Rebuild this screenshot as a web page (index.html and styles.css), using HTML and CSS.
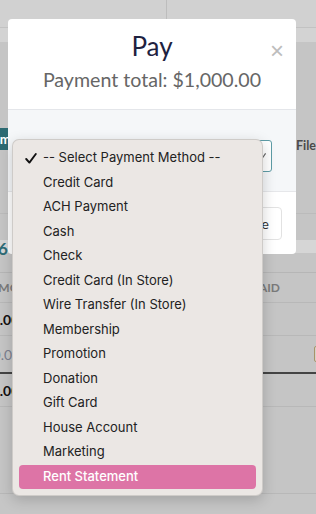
FILE: index.html
```html
<!DOCTYPE html>
<html lang="en">
<head>
  <meta charset="UTF-8">
  <title>Pay</title>
  <link rel="stylesheet" href="styles.css">
</head>
<body>
  <!-- page behind the modal (dimmed) -->
  <div class="page">
    <div class="topbar">
      <div class="tab"></div>
      <div class="tab"></div>
    </div>
    <div class="strip"></div>
    <div class="content">
      <div class="toolbar">
        <span class="btn-teal">Import</span>
        <span class="file-link">File</span>
      </div>
      <div class="divider"></div>
      <div class="count-row"><span class="count">6</span></div>
      <div class="table">
        <div class="row head"><span class="cell-left">AMOUNT</span><span class="cell-right">PAID</span></div>
        <div class="row"><span class="cell-left strong">1,000.00</span><span class="cell-right"></span></div>
        <div class="row total"><span class="cell-left muted">1,000.00</span><span class="check"></span></div>
        <div class="row"><span class="cell-left strong">1,000.00</span><span class="cell-right"></span></div>
        <div class="row last"></div>
      </div>
    </div>
  </div>

  <!-- modal -->
  <div class="modal">
    <div class="modal-head">
      <h2 class="modal-title">Pay</h2>
      <div class="modal-sub">Payment total: $1,000.00</div>
      <span class="modal-close">&times;</span>
    </div>
    <div class="modal-body">
      <div class="select-box">
        <svg class="chev" width="9" height="6" viewBox="0 0 9 6"><path d="M1 1l3.5 3.5L8 1" fill="none" stroke="#666" stroke-width="1.2"/></svg>
      </div>
    </div>
    <div class="modal-foot">
      <button class="btn-close">Close</button>
    </div>
  </div>

  <!-- native select popup -->
  <div class="dropdown">
    <div class="opt checked">
      <svg class="tick" width="12" height="11" viewBox="0 0 12 11"><path d="M1.2 6l3.2 3.6L10.8 1" fill="none" stroke="#111" stroke-width="1.9" stroke-linecap="round" stroke-linejoin="round"/></svg>
      -- Select Payment Method --
    </div>
    <div class="opt">Credit Card</div>
    <div class="opt">ACH Payment</div>
    <div class="opt">Cash</div>
    <div class="opt">Check</div>
    <div class="opt">Credit Card (In Store)</div>
    <div class="opt">Wire Transfer (In Store)</div>
    <div class="opt">Membership</div>
    <div class="opt">Promotion</div>
    <div class="opt">Donation</div>
    <div class="opt">Gift Card</div>
    <div class="opt">House Account</div>
    <div class="opt">Marketing</div>
    <div class="opt active">Rent Statement</div>
  </div>
</body>
</html>
```

FILE: styles.css
```css
body {
  margin: 0;
  width: 316px;
  height: 514px;
  overflow: hidden;
  background: #c6c6c6;
  font-family: 'Lato', 'Open Sans', sans-serif;
  position: relative;
}
.page {
  height: 514px;
  overflow: hidden;
}
.topbar {
  display: flex;
  height: 28px;
  background: #d1d1d1;
  border-bottom: 1px solid #c2c2c2;
  box-sizing: border-box;
}
.tab {
  width: 166px;
  border-right: 1px solid #bdbdbd;
}
.tab + .tab { flex: 1; border-right: none; }
.strip {
  height: 14px;
  background: #d3d3d3;
}
.content {
  background: #c5c5c5;
}
.toolbar {
  display: flex;
  justify-content: space-between;
  align-items: center;
  padding-top: 86px;
  height: 22px;
}
.btn-teal {
  background: #2c6a72;
  color: #fff;
  font-size: 13px;
  font-weight: 700;
  line-height: 22px;
  padding: 0 30px 0 0;
  margin-left: -4px;
  width: 80px;
}
.file-link {
  color: #4a4a4a;
  font-family: 'Lato', sans-serif;
  font-weight: 700;
  font-size: 12.5px;
  margin-right: 0;
  margin-top: 12px;
}
.divider {
  height: 63px;
  border-bottom: 1px solid #bbbbbb;
}
.count-row {
  margin-top: 26px;
  height: 13px;
  background: #d6d6d6;
  line-height: 17px;
}
.count {
  color: #2f6c77;
  font-size: 17px;
  font-weight: 700;
  margin-left: -2px;
}
.table {
  margin-top: 19px;
  border-top: 1px solid #b6b6b6;
}
.row {
  display: flex;
  justify-content: space-between;
  align-items: center;
  height: 30px;
  border-bottom: 1px solid #b8b8b8;
}
.row.head { height: 29px; }
.row + .row { height: 32px; }
.row.total { height: 36px; border-bottom: 2px solid #444; }
.row.last { height: 86px; }
.cell-left {
  margin-left: -9px;
  font-size: 14px;
  font-weight: 700;
  color: #111;
}
.head .cell-left, .head .cell-right {
  font-size: 12px;
  color: #7a7a7a;
}
.head .cell-left { margin-left: -10px; }
.cell-left.strong { margin-left: -36px; }
.cell-left.muted { margin-left: -35px; color: #7b7f8f; font-weight: 400; }
.cell-right { margin-right: 36px; font-weight: 700; }
.check {
  width: 14px;
  height: 14px;
  border: 1px solid #a8936a;
  border-radius: 2px;
  margin-right: -14px;
  background: #d6d3c9;
}

/* modal */
.modal {
  position: absolute;
  left: 8px;
  top: 19px;
  width: 288px;
  height: 235px;
  background: #fff;
  border-radius: 4px;
  overflow: hidden;
}
.modal-head {
  position: relative;
  height: 91px;
  box-sizing: border-box;
  border-bottom: 1px solid #e4e6ea;
  text-align: center;
  padding-top: 12px;
}
.modal-title {
  margin: 0;
  font-size: 26px;
  font-weight: 400;
  color: #1e2240;
  line-height: 30px;
}
.modal-sub {
  margin-top: 7px;
  font-size: 19.6px;
  color: #666;
  line-height: 24px;
}
.modal-close {
  position: absolute;
  right: 12px;
  top: 18px;
  font-size: 24px;
  color: #bdbdbd;
  font-family: 'Liberation Sans', sans-serif;
}
.modal-body {
  height: 82px;
  box-sizing: border-box;
  background: #f5f7f9;
  border-bottom: 1px solid #e6e7ea;
  padding: 30px 24px 0 24px;
}
.select-box {
  height: 32px;
  box-sizing: border-box;
  border: 1px solid #5e9ca6;
  border-radius: 3px;
  background: #fff;
  display: flex;
  justify-content: flex-end;
  align-items: center;
  padding-right: 4px;
}
.chev { transform: rotate(-10deg); }
.modal-foot {
  display: flex;
  justify-content: flex-end;
  padding: 15px 14px 0 0;
}
.btn-close {
  height: 33px;
  padding: 0 12px;
  border: 1px solid #e2e2e2;
  border-radius: 4px;
  background: #fff;
  font-family: 'Lato', sans-serif;
  font-size: 14px;
  color: #333;
}

/* native select popup */
.dropdown {
  position: absolute;
  left: 12px;
  top: 139px;
  width: 251px;
  box-sizing: border-box;
  padding: 6px 6px;
  background: #ebe7e4;
  border: 1px solid rgba(0, 0, 0, 0.12);
  border-radius: 7px;
  box-shadow: 0 4px 14px rgba(0, 0, 0, 0.18);
  font-family: 'Inter', 'Liberation Sans', sans-serif;
  font-size: 13px;
  color: #222;
}
.opt {
  position: relative;
  height: 24.5px;
  line-height: 23px;
  padding-left: 24px;
  border-radius: 4px;
}
.tick {
  position: absolute;
  left: 6px;
  top: 7px;
}
.opt.active {
  background: #dd74a6;
  color: #fff;
  font-weight: 500;
}
```
